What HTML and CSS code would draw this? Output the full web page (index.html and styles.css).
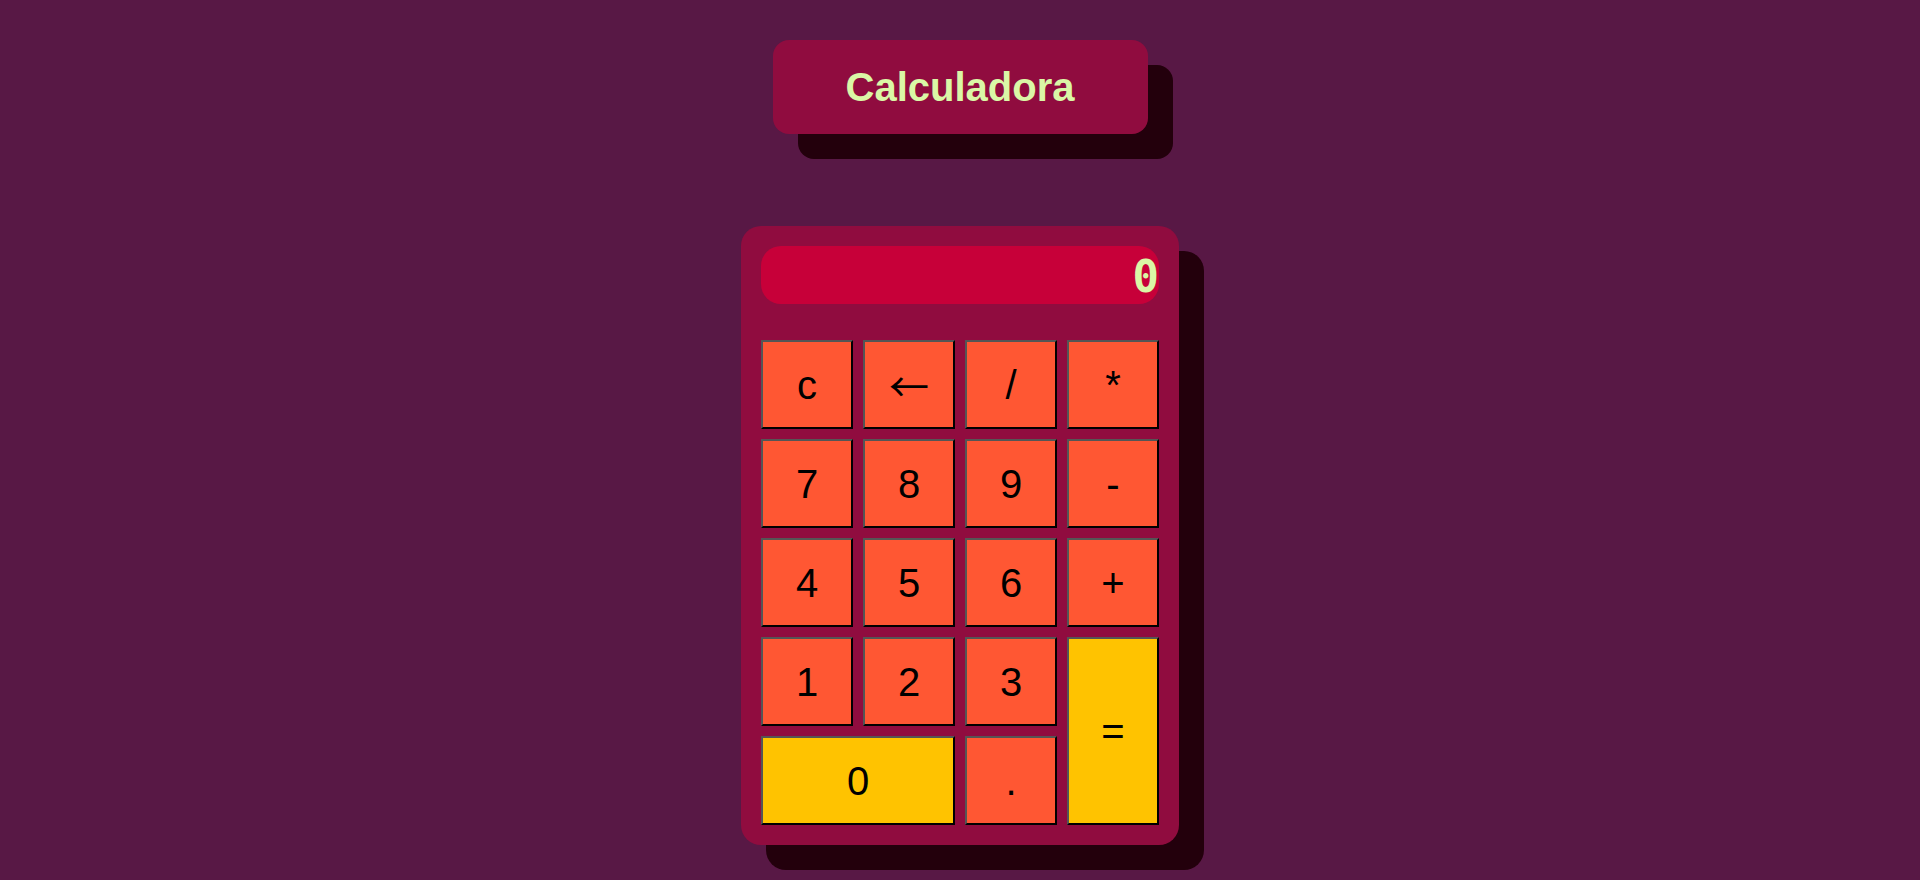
FILE: index.html
```html
<!DOCTYPE html>
<html lang="es">
<head>
<meta charset="utf-8">
<title>Calculadora</title>
<link rel="stylesheet" href="styles.css">
</head>
<body>
<main class="page">
  <h1 class="title">Calculadora</h1>
  <div class="calc">
    <div class="display">0</div>
    <div class="keys">
      <button class="key">c</button>
      <button class="key key-arrow">&larr;</button>
      <button class="key">/</button>
      <button class="key">*</button>
      <button class="key">7</button>
      <button class="key">8</button>
      <button class="key">9</button>
      <button class="key">-</button>
      <button class="key">4</button>
      <button class="key">5</button>
      <button class="key">6</button>
      <button class="key">+</button>
      <button class="key">1</button>
      <button class="key">2</button>
      <button class="key">3</button>
      <button class="key key-accent key-equals">=</button>
      <button class="key key-accent key-zero">0</button>
      <button class="key">.</button>
    </div>
  </div>
</main>
</body>
</html>
```

FILE: styles.css
```css
html, body {
  margin: 0;
  padding: 0;
}
body {
  background: #581845;
  font-family: "Liberation Sans", Arial, sans-serif;
  height: 880px;
  overflow: hidden;
}
.page {
  display: flex;
  flex-direction: column;
  align-items: center;
  padding-top: 40px;
}
.title {
  margin: 0;
  width: 375px;
  height: 94px;
  line-height: 94px;
  text-align: center;
  background: #900C3F;
  border-radius: 16px;
  box-shadow: 25px 25px 0 #23000c;
  color: #DAF7A6;
  font-family: "Liberation Sans", Arial, sans-serif;
  font-size: 40px;
  font-weight: bold;
}
.calc {
  margin-top: 92px;
  width: 398px;
  padding: 20px;
  background: #900C3F;
  border-radius: 20px;
  box-shadow: 25px 25px 0 #23000c;
}
.display {
  height: 58px;
  line-height: 62px;
  background: #C70039;
  border-radius: 20px;
  text-align: right;
  color: #DAF7A6;
  font-family: "DejaVu Sans Mono", monospace;
  font-weight: bold;
  font-size: 44px;
  overflow: visible;
}
.keys {
  margin-top: 36px;
  display: grid;
  grid-template-columns: repeat(4, 92px);
  grid-template-rows: repeat(5, 89px);
  gap: 10px;
}
.key {
  margin: 0;
  padding: 0;
  background: #FF5733;
  border: 2px solid;
  border-color: #555555 #000000 #000000 #555555;
  color: #000;
  font-family: "Liberation Sans", Arial, sans-serif;
  font-size: 40px;
  line-height: 1;
}
.key-arrow {
  font-family: "Noto Sans CJK SC", sans-serif;
  font-size: 40px;
}
.key-accent {
  background: #FFC300;
}
.key-equals {
  grid-column: 4;
  grid-row: 4 / span 2;
}
.key-zero {
  grid-column: 1 / span 2;
}
```
